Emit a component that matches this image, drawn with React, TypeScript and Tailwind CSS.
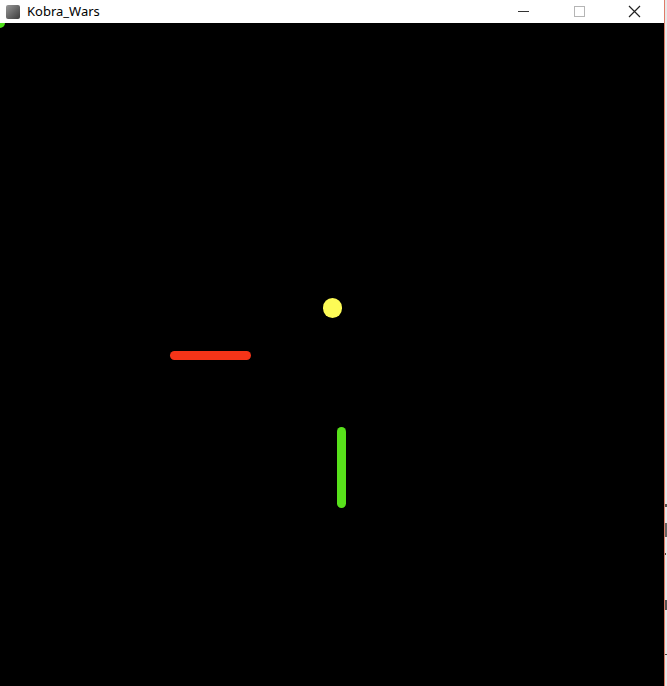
import React from "react";

export default function App() {
  return (
    <div className="w-[667px] h-[686px] flex bg-[#e6e6e6] overflow-hidden" style={{ fontFamily: '"Segoe UI", "Noto Sans", "Liberation Sans", sans-serif' }}>
      <div className="w-[664px] h-full flex flex-col">
        <div className="h-[23px] bg-white flex items-center shrink-0">
          <div className="ml-[6px] w-[14px] h-[14px] rounded-[2px] bg-gradient-to-br from-[#9a9a9a] to-[#3c3c3c]" />
          <span className="ml-[7px] text-[13px] text-black leading-none">Kobra_Wars</span>
          <div className="ml-auto mr-[7px] flex items-center h-full">
            <div className="w-[46px] h-full flex items-center justify-center">
              <div className="w-[11px] h-px bg-[#333]" />
            </div>
            <div className="ml-[10px] w-[46px] h-full flex items-center justify-center">
              <div className="w-[11px] h-[11px] border border-[#b5b5b5]" />
            </div>
            <div className="ml-[9px] w-[46px] h-full flex items-center justify-center">
              <svg width="13" height="13" viewBox="0 0 13 13">
                <path d="M1 1 L12 12 M12 1 L1 12" stroke="#222" strokeWidth="1.2" />
              </svg>
            </div>
          </div>
        </div>
        <div className="relative flex-1 bg-black">
          <div className="absolute left-0 top-0 w-[5px] h-[5px] rounded-br-full bg-[#4fe01a]" />
          <div className="absolute left-[323px] top-[275px] w-[19px] h-[20px] rounded-full bg-[#fdfb56]" />
          <div className="absolute left-[170px] top-[328px] w-[81px] h-[9px] rounded-full bg-[#f53418]" />
          <div className="absolute left-[337px] top-[404px] w-[9px] h-[81px] rounded-full bg-[#58e11b]" />
        </div>
      </div>
      <div className="w-px h-full bg-[#e07a68]" />
      <div className="relative flex-1 bg-[#e8e8e8]">
        <div className="absolute left-0 top-[504px] w-[2px] h-[3px] bg-[#555]" />
        <div className="absolute left-0 top-[523px] w-[2px] h-[14px] bg-[#666]" />
        <div className="absolute left-0 top-[553px] w-[1px] h-[2px] bg-[#444]" />
        <div className="absolute left-0 top-[600px] w-[2px] h-[10px] bg-[#555]" />
        <div className="absolute left-0 top-[654px] w-[2px] h-px bg-[#444]" />
      </div>
    </div>
  );
}
